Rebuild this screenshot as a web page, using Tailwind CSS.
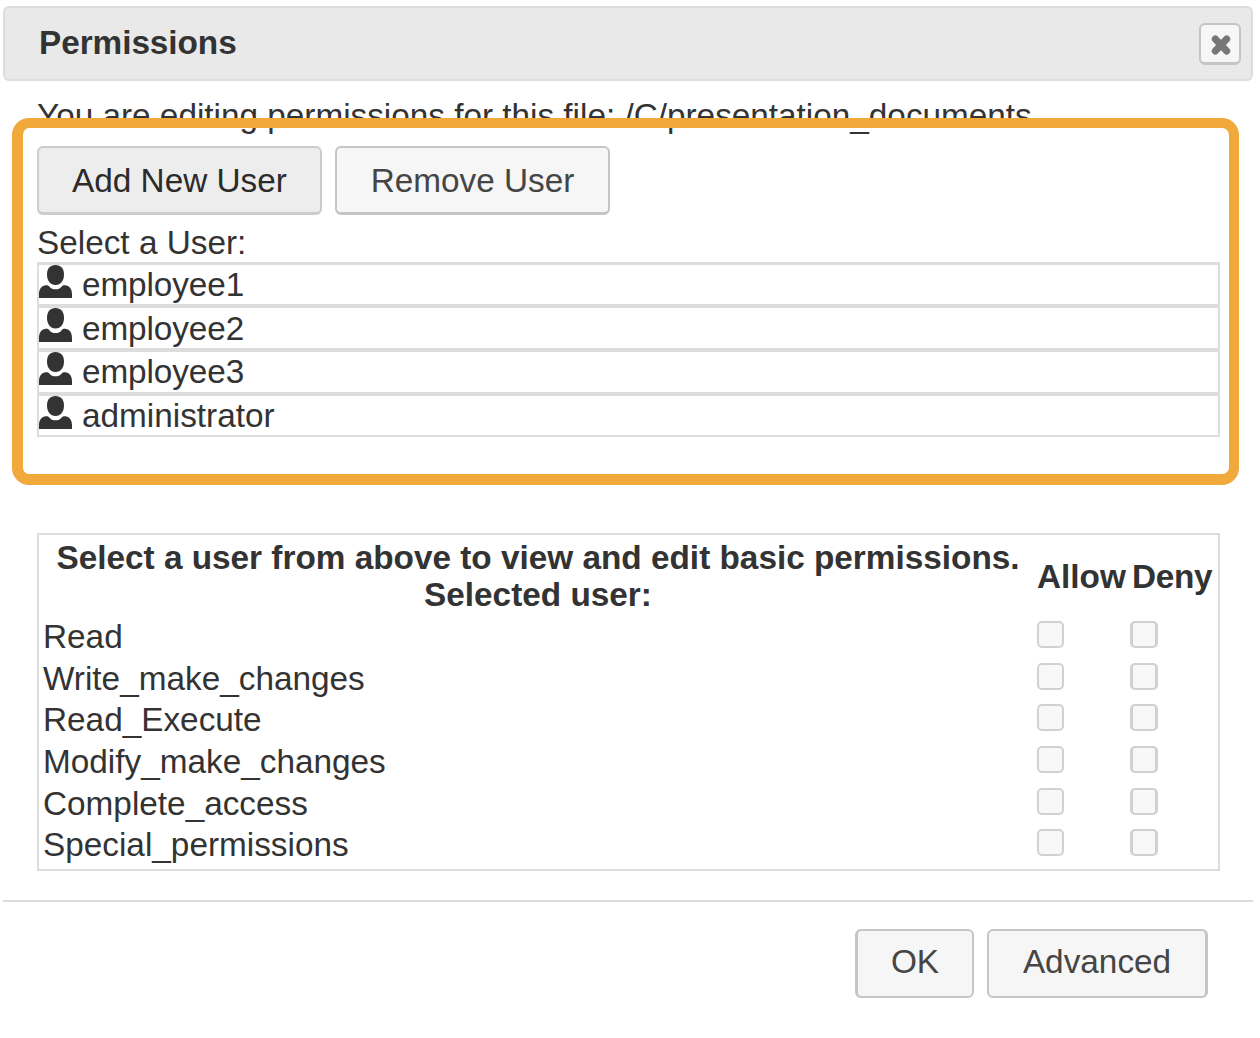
<!DOCTYPE html>
<html lang="en">
<head>
<meta charset="utf-8">
<title>Permissions</title>
<script src="https://cdn.jsdelivr.net/npm/@tailwindcss/browser@4"></script>
</head>
<body class="bg-white">
<svg class="hidden">
  <symbol id="user" viewBox="0 0 33 33" preserveAspectRatio="none">
    <path d="M16.500 0C21.800 0 25 3.500 25 9.500C25 15.500 21.800 20 16.500 20C11.200 20 8 15.500 8 9.500C8 3.500 11.200 0 16.500 0Z"/>
    <path d="M0 33V29.500C0 24.500 2 21.300 5.500 20.500C7.500 20 9.300 20.200 10.300 21.500C13 25.300 20 25.300 22.700 21.500C23.700 20.200 25.500 20 27.500 20.500C31 21.300 33 24.500 33 29.500V33Z"/>
  </symbol>
</svg>
<main class="relative w-[1260px] h-[1038px] overflow-hidden pl-[3px] pr-[7px] pt-[6px] font-['Liberation_Sans',Arial,sans-serif] text-[33.33px] leading-[38px] text-[#333]">
  <header class="flex h-[75px] items-start justify-between rounded-[6px] border-2 border-[#ddd] bg-[#e9e9e9] pl-[34px] pr-[10px]">
    <h1 class="mt-[16px] font-bold tracking-[-0.05px]">Permissions</h1>
    <button class="mt-[15px] flex h-[42px] w-[42px] items-center justify-center rounded-[6px] border-2 border-b-3 border-[#c5c5c5] bg-[#f6f6f6]" aria-label="Close">
      <svg class="ml-[2px] mt-[2px] h-[20px] w-[20px]" viewBox="0 0 20 20" stroke="#777" stroke-width="7" stroke-linecap="round"><path d="M4.300 4L15.700 16M15.700 4L4.300 16"/></svg>
    </button>
  </header>
  <section class="pl-[34px] pr-[33px] pt-[16px]">
    <p class="h-[38px] whitespace-nowrap tracking-[-0.01px]">You are editing permissions for this file: /C/presentation_documents</p>
    <div class="mt-[11px] flex gap-[13px]">
      <button class="h-[69px] w-[285px] rounded-[6px] border-2 border-b-3 border-[#ccc] bg-[#ededed] pt-[2px] text-[#2b2b2b]">Add New User</button>
      <button class="h-[69px] w-[275px] rounded-[6px] border-2 border-b-3 border-[#c5c5c5] bg-[#f6f6f6] pt-[2px] text-[#454545]">Remove User</button>
    </div>
    <h2 class="mt-[9px] h-[38px]">Select a User:</h2>
    <ul class="flex h-[175px] flex-col border-2 border-t-3 border-[#ddd]">
      <li class="flex h-[43px] items-start gap-[10px] border-b-4 border-[#ddd]"><svg class="h-[33px] w-[33px]" fill="#333"><use href="#user"/></svg><span class="mt-px tracking-[-0.1px]">employee1</span></li>
      <li class="flex h-[44px] items-start gap-[10px] border-b-4 border-[#ddd]"><svg class="h-[34px] w-[33px]" fill="#333"><use href="#user"/></svg><span class="mt-[2px] tracking-[-0.1px]">employee2</span></li>
      <li class="flex h-[44px] items-start gap-[10px] border-b-4 border-[#ddd]"><svg class="h-[33px] w-[33px]" fill="#333"><use href="#user"/></svg><span class="mt-px tracking-[-0.1px]">employee3</span></li>
      <li class="flex items-start gap-[10px]"><svg class="h-[33px] w-[33px]" fill="#333"><use href="#user"/></svg><span class="mt-px">administrator</span></li>
    </ul>
    <div class="mt-[96px] h-[338px] border-2 border-[#ddd] pl-[4px] pt-[4px]">
      <div class="grid h-[77px] grid-cols-[990px_4px_95px_1fr] items-start font-bold leading-[37px]">
        <div class="text-center"><p class="whitespace-nowrap">Select a user from above to view and edit basic permissions.</p><p>Selected user:</p></div>
        <span></span>
        <p class="mt-[19px]">Allow</p><p class="mt-[19px] tracking-[-0.3px]">Deny</p>
      </div>
      <div id="rows"></div>
    </div>
  </section>
  <hr class="mt-[29px] border-0 border-t-2 border-[#ddd]">
  <footer class="flex justify-end gap-[13px] pr-[45px] pt-[27px] text-[#454545]">
    <button class="h-[69px] w-[119px] rounded-[6px] border-2 border-l-3 border-[#c5c5c5] bg-[#f6f6f6] pb-[4px]">OK</button>
    <button class="h-[69px] w-[221px] rounded-[6px] border-2 border-r-3 border-[#c5c5c5] bg-[#f6f6f6] pb-[4px]">Advanced</button>
  </footer>
  <div class="pointer-events-none absolute left-[12px] top-[118px] h-[367px] w-[1227px] rounded-[17px] border-10 border-b-11 border-l-11 border-[#f2a93b]"></div>
</main>
<script>
  const names = ['Read', 'Write_make_changes', 'Read_Execute', 'Modify_make_changes', 'Complete_access', 'Special_permissions'];
  document.getElementById('rows').innerHTML = names.map(name => `
    <div class="grid h-[41.67px] grid-cols-[994px_93px_1fr] items-start">
      <span class="mt-[2px]">${name}</span>
      <span class="mt-[5px] h-[27px] w-[27px] rounded-[5px] border-2 border-[#d1d1d1] bg-[#f8f8f8]"></span>
      <span class="mt-[5px] h-[27px] w-[28px] rounded-[5px] border-2 border-x-3 border-[#d1d1d1] bg-[#f8f8f8]"></span>
    </div>`).join('');
</script>
</body>
</html>
